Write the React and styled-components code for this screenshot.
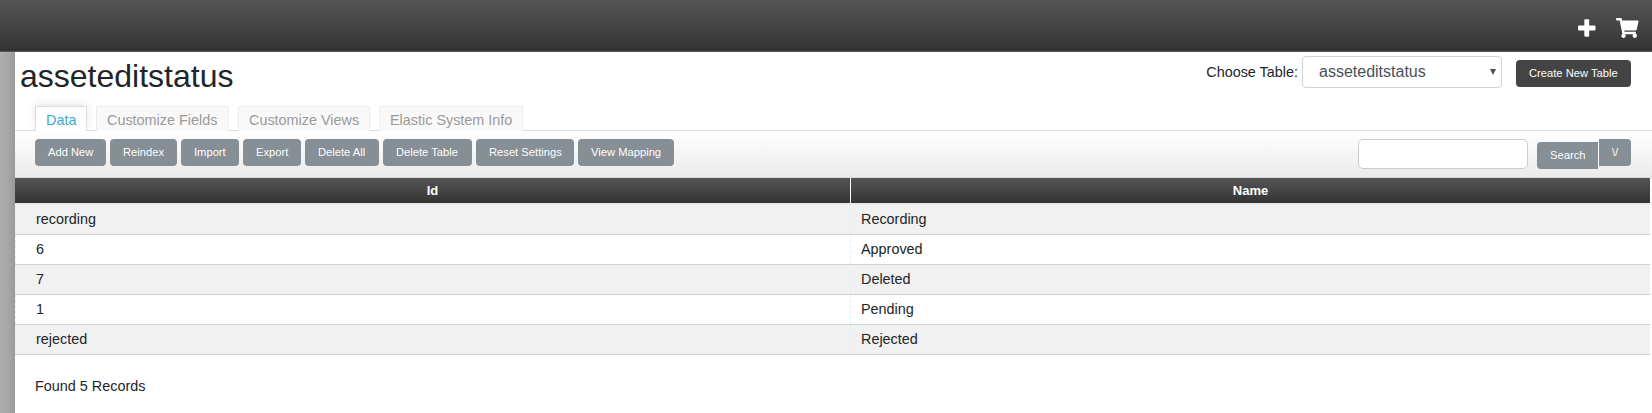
import React from "react";
import styled, { createGlobalStyle } from "styled-components";
import { FaShoppingCart } from "react-icons/fa";

const Global = createGlobalStyle`
  * { box-sizing: border-box; }
  body {
    margin: 0;
    background: #fff;
    color: #212529;
    font-family: "Liberation Sans", Arial, sans-serif;
    font-size: 14.4px;
    overflow: hidden;
  }
`;

const Page = styled.div`
  height: 413px;
  display: flex;
  flex-direction: column;
`;

const TopBar = styled.header`
  height: 52px;
  flex: none;
  display: flex;
  justify-content: flex-end;
  gap: 20.5px;
  padding: 18px 13.5px 0 0;
  color: #fff;
  background: linear-gradient(#555, #333);
  border-bottom: 1px solid #555;
  svg { display: block; height: 20px; }
`;

const PlusIcon = styled.svg`
  width: 17.5px;
  fill: currentColor;
`;

const CartIcon = styled(FaShoppingCart)`
  width: 22.5px;
`;

const Body = styled.div`
  flex: 1;
  display: flex;
`;

const Sidebar = styled.aside`
  width: 15px;
  background: linear-gradient(to right, #adadad, #aaa 40%, #9a9a9a);
`;

const Main = styled.main`
  flex: 1;
  min-width: 0;
`;

const TitleRow = styled.div`
  height: 54px;
  display: flex;
  justify-content: space-between;
  padding: 4px 21px 0 5px;
`;

const Title = styled.h1`
  margin: 1px 0 0;
  font-size: 32px;
  line-height: 38px;
  font-weight: 400;
`;

const Chooser = styled.div`
  display: flex;
  align-items: flex-start;
`;

const Label = styled.label`
  margin: 8px 4px 0 0;
  line-height: 16px;
`;

const Select = styled.div`
  width: 200px;
  height: 32px;
  margin-right: 14px;
  padding: 0 5px 0 16px;
  display: flex;
  align-items: center;
  justify-content: space-between;
  border: 1px solid #ced4da;
  border-radius: 4px;
  background: #fff;
  color: #495057;
  font-size: 16px;
`;

const Arrow = styled.svg`
  display: block;
  width: 6px;
  height: 6px;
  margin-top: -1px;
`;

const Button = styled.button`
  height: 27px;
  width: ${(p) => p.$width}px;
  margin: ${(p) => p.$top || 0}px 0 0;
  padding: 0 0 1px 13px;
  border: 0;
  border-radius: ${(p) => p.$radius || "4px"};
  background: ${(p) => (p.$dark ? "#444" : "#868e96")};
  color: #fff;
  font: 11.2px/26px "Liberation Sans", Arial, sans-serif;
  text-align: left;
  white-space: nowrap;
`;

const Tabs = styled.nav`
  height: 25px;
  display: flex;
  gap: 9px;
  padding-left: 20px;
  background: linear-gradient(#ddd, #ddd) bottom / 100% 1px no-repeat;
`;

const Tab = styled.a`
  width: ${(p) => p.$width}px;
  padding-left: 10px;
  border: 1px solid ${(p) => (p.$active ? "#ddd" : "#eee")};
  border-bottom: 0;
  background: ${(p) => (p.$active ? "#fff" : "#f9f9f9")};
  color: ${(p) => (p.$active ? "#3ba9d1" : "#999")};
  box-shadow: ${(p) => (p.$active ? "0 -2px 10px rgba(0, 0, 0, 0.1)" : "none")};
  clip-path: inset(-12px -12px 0 -12px);
  line-height: 26px;
  white-space: nowrap;
`;

const Toolbar = styled.div`
  height: 47px;
  display: flex;
  justify-content: space-between;
  padding: 8px 21px 0 20px;
  background: linear-gradient(#fff, #ebebeb);
  border-bottom: 1px solid #ddd;
`;

const Actions = styled.div`
  display: flex;
  gap: 4px;
`;

const SearchGroup = styled.div`
  display: flex;
  align-items: flex-start;
`;

const SearchInput = styled.input`
  width: 170px;
  height: 30px;
  margin: 0 9px 0 0;
  border: 1px solid #ccc;
  border-radius: 5px;
  background: #fff;
`;

const Divider = styled.span`
  width: 1px;
  height: 30px;
  background: #fff;
`;

const Table = styled.div`
  margin-right: 2px;
`;

const HeadRow = styled.div`
  height: 25px;
  display: grid;
  grid-template-columns: 835px 1fr;
  background: linear-gradient(#555, #333);
  color: #fff;
  font-size: 13px;
  font-weight: 700;
  line-height: 25px;
  text-align: center;
`;

const HeadCell = styled.div`
  & + & { border-left: 1px solid #fff; }
`;

const Row = styled.div`
  height: ${(p) => (p.$first ? 32 : 30)}px;
  display: grid;
  grid-template-columns: 835px 1fr;
  background: ${(p) => (p.$odd ? "#f1f1f1" : "#fff")};
  border-top: ${(p) => (p.$first ? "2px solid #e9ecef" : "0")};
  border-bottom: 1px solid #d0d1d2;
  line-height: 28px;
`;

const Cell = styled.div`
  padding-left: ${(p) => (p.$first ? 20 : 10)}px;
  border-left: 1px dashed ${(p) => (p.$first ? "#eee" : "#ddeef6")};
`;

const Summary = styled.p`
  margin: 23px 0 0 20px;
  line-height: 16px;
`;

const tabs = [
  ["Data", 52],
  ["Customize Fields", 133],
  ["Customize Views", 132],
  ["Elastic System Info", 144],
];

const actions = [
  ["Add New", 71],
  ["Reindex", 67],
  ["Import", 58],
  ["Export", 58],
  ["Delete All", 74],
  ["Delete Table", 89],
  ["Reset Settings", 98],
  ["View Mapping", 96],
];

const records = [
  ["recording", "Recording"],
  ["6", "Approved"],
  ["7", "Deleted"],
  ["1", "Pending"],
  ["rejected", "Rejected"],
];

export default function App() {
  return (
    <Page>
      <Global />
      <TopBar>
        <PlusIcon viewBox="0 0 448 512">
          <path d="M424 194H286V56c0-13.300-10.700-24-24-24h-76c-13.300 0-24 10.700-24 24v138H24c-13.300 0-24 10.700-24 24v76c0 13.300 10.700 24 24 24h138v138c0 13.300 10.700 24 24 24h76c13.300 0 24-10.700 24-24V318h138c13.300 0 24-10.700 24-24v-76c0-13.300-10.700-24-24-24z" />
        </PlusIcon>
        <CartIcon />
      </TopBar>
      <Body>
        <Sidebar />
        <Main>
          <TitleRow>
            <Title>asseteditstatus</Title>
            <Chooser>
              <Label>Choose Table:</Label>
              <Select>
                asseteditstatus
                <Arrow viewBox="0 0 6 6"><path d="M0 0h6L3 6z" fill="#495057" /></Arrow>
              </Select>
              <Button $dark $width={115} $top={4}>Create New Table</Button>
            </Chooser>
          </TitleRow>
          <Tabs>
            {tabs.map(([name, width], i) => (
              <Tab key={name} $width={width} $active={i === 0}>{name}</Tab>
            ))}
          </Tabs>
          <Toolbar>
            <Actions>
              {actions.map(([name, width]) => (
                <Button key={name} $width={width}>{name}</Button>
              ))}
            </Actions>
            <SearchGroup>
              <SearchInput />
              <Button $width={61} $top={3} $radius="4px 0 0 4px">Search</Button>
              <Divider />
              <Button $width={32} $radius="0 4px 4px 0">\/</Button>
            </SearchGroup>
          </Toolbar>
          <Table>
            <HeadRow>
              <HeadCell>Id</HeadCell>
              <HeadCell>Name</HeadCell>
            </HeadRow>
            {records.map(([id, name], i) => (
              <Row key={id} $first={i === 0} $odd={i % 2 === 0}>
                <Cell $first>{id}</Cell>
                <Cell>{name}</Cell>
              </Row>
            ))}
          </Table>
          <Summary>Found 5 Records</Summary>
        </Main>
      </Body>
    </Page>
  );
}
